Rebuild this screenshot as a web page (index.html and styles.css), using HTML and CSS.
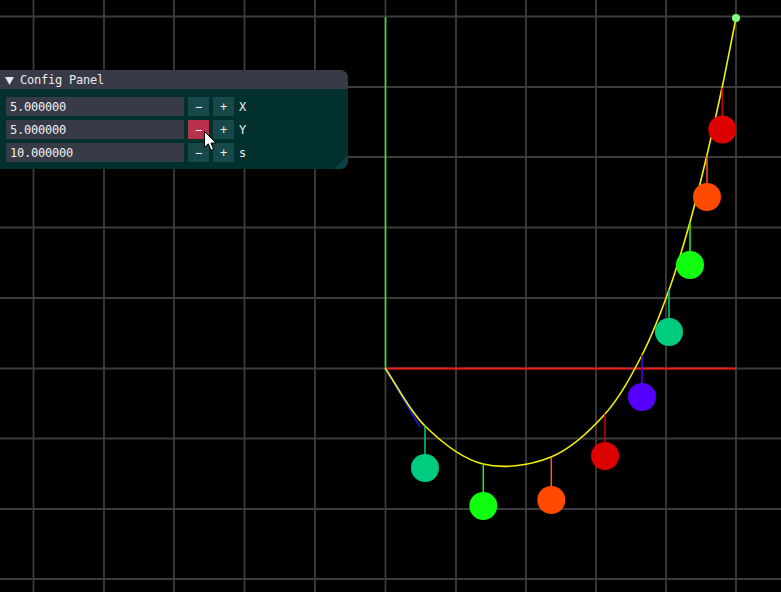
FILE: index.html
```html
<!DOCTYPE html>
<html>
<head>
<meta charset="utf-8">
<link rel="stylesheet" href="styles.css">
</head>
<body>
<div class="scene">
  <svg class="plot" width="781" height="592" viewBox="0 0 781 592">
    <g class="grid">
      <line x1="33.5" y1="0" x2="33.5" y2="592"/>
      <line x1="104" y1="0" x2="104" y2="592"/>
      <line x1="174" y1="0" x2="174" y2="592"/>
      <line x1="244.5" y1="0" x2="244.5" y2="592"/>
      <line x1="315" y1="0" x2="315" y2="592"/>
      <line x1="385.5" y1="0" x2="385.5" y2="592"/>
      <line x1="456" y1="0" x2="456" y2="592"/>
      <line x1="526" y1="0" x2="526" y2="592"/>
      <line x1="596" y1="0" x2="596" y2="592"/>
      <line x1="666" y1="0" x2="666" y2="592"/>
      <line x1="736" y1="0" x2="736" y2="592"/>
      <line x1="0" y1="16.5" x2="781" y2="16.5"/>
      <line x1="0" y1="87" x2="781" y2="87"/>
      <line x1="0" y1="157" x2="781" y2="157"/>
      <line x1="0" y1="227.5" x2="781" y2="227.5"/>
      <line x1="0" y1="298" x2="781" y2="298"/>
      <line x1="0" y1="368.5" x2="781" y2="368.5"/>
      <line x1="0" y1="438.5" x2="781" y2="438.5"/>
      <line x1="0" y1="509" x2="781" y2="509"/>
      <line x1="0" y1="579" x2="781" y2="579"/>
    </g>
    <line class="axis-y" x1="385.5" y1="17" x2="385.5" y2="368"/>
    <line class="axis-x" x1="385" y1="368.5" x2="736" y2="368.5"/>
    <line class="handle" x1="385" y1="368" x2="420" y2="427"/>
    <path class="curve" d="M385 368 C398.3 387.3 408.7 410 425 426 C441.3 442 462 458.8 483 464 C504 469.2 530.7 465.3 551 457 C571.3 448.7 589.8 431 605 414 C620.2 397 631.3 375.7 642 355 C652.7 334.3 661 312.2 669 290 C677 267.8 683.7 244.5 690 222 C696.3 199.5 701.7 177.3 707 155 C712.3 132.7 717.2 110.8 722 88 C726.8 65.2 731.3 41.3 736 18"/>
    <g class="bobs">
      <line x1="425" y1="426" x2="425" y2="468" stroke="#00cc80"/>
      <circle cx="425" cy="468" r="14" fill="#00cc80"/>
      <line x1="483.3" y1="464" x2="483.3" y2="506" stroke="#20f020"/>
      <circle cx="483.3" cy="506" r="14" fill="#10ff10"/>
      <line x1="551.3" y1="458" x2="551.3" y2="500" stroke="#ff5a10"/>
      <circle cx="551.3" cy="500" r="14" fill="#ff4a00"/>
      <line x1="605" y1="414" x2="605" y2="456" stroke="#cc0000"/>
      <circle cx="605" cy="456" r="14" fill="#dd0000"/>
      <line x1="642" y1="355" x2="642" y2="397" stroke="#5500ee"/>
      <circle cx="642" cy="397" r="14" fill="#5500ff"/>
      <line x1="669" y1="290" x2="669" y2="332" stroke="#00cc80"/>
      <circle cx="669" cy="332" r="14" fill="#00cc80"/>
      <line x1="690" y1="223" x2="690" y2="265" stroke="#20f020"/>
      <circle cx="690" cy="265" r="14" fill="#10ff10"/>
      <line x1="707" y1="156" x2="707" y2="197" stroke="#ff5a10"/>
      <circle cx="707" cy="197" r="14" fill="#ff4a00"/>
      <line x1="722.3" y1="88" x2="722.3" y2="129.5" stroke="#cc0000"/>
      <circle cx="722.3" cy="129.5" r="14" fill="#dd0000"/>
    </g>
    <circle cx="736" cy="18" r="4" fill="#80ff80"/>
  </svg>

  <div class="panel">
    <div class="title">
      <svg class="arrow" width="9" height="8" viewBox="0 0 9 8"><polygon points="0,0 9,0 4.5,8" fill="#e6e6e6"/></svg>
      <span>Config Panel</span>
    </div>
    <div class="body">
      <div class="row">
        <div class="input">5.000000</div>
        <div class="btn">−</div>
        <div class="btn">+</div>
        <span class="label">X</span>
      </div>
      <div class="row">
        <div class="input">5.000000</div>
        <div class="btn active">−</div>
        <div class="btn">+</div>
        <span class="label">Y</span>
      </div>
      <div class="row">
        <div class="input">10.000000</div>
        <div class="btn">−</div>
        <div class="btn">+</div>
        <span class="label">s</span>
      </div>
    </div>
    <div class="grip"></div>
  </div>

  <svg class="cursor" width="13" height="21" viewBox="0 0 13 21">
    <path d="M0.5 0.5 L0.5 16.5 L4.3 12.8 L7 19.3 L9.6 18.2 L7 12 L12 12 Z" fill="#ffffff" stroke="#000000" stroke-width="1"/>
  </svg>
</div>
</body>
</html>
```

FILE: styles.css
```css
html, body {
  margin: 0;
  padding: 0;
  background: #000;
  overflow: hidden;
}

.scene {
  position: relative;
  width: 781px;
  height: 592px;
  background: #000;
  overflow: hidden;
  font-family: "DejaVu Sans Mono", "Liberation Mono", monospace;
  font-size: 12px;
  letter-spacing: -0.22px;
  color: #ececec;
}

.plot {
  display: block;
}

.grid line {
  stroke: #3c3c3c;
  stroke-width: 1.8;
}

.axis-y {
  stroke: #33e033;
  stroke-width: 1.6;
}

.axis-x {
  stroke: #ee1a1a;
  stroke-width: 2;
}

.handle {
  stroke: #1414e6;
  stroke-width: 1.6;
}

.curve {
  fill: none;
  stroke: #f0f000;
  stroke-width: 1.6;
}

.bobs line {
  stroke-width: 1.5;
}

.panel {
  position: absolute;
  left: -10px;
  top: 70px;
  width: 358px;
  border-radius: 8px;
  overflow: hidden;
  background: #01302f;
}

.title {
  height: 19px;
  background: #383a47;
  display: flex;
  align-items: center;
  padding-left: 15px;
  padding-top: 1px;
  box-sizing: border-box;
  gap: 6px;
  line-height: 18px;
}

.arrow {
  display: block;
  margin-top: 1px;
}

.body {
  display: flex;
  flex-direction: column;
  gap: 4px;
  padding: 8px 0 7px 16px;
}

.row {
  display: flex;
  align-items: center;
  gap: 4px;
  height: 19px;
}

.input {
  width: 174px;
  height: 19px;
  line-height: 20px;
  padding-left: 4px;
  background: #373a47;
  color: #f0f0f0;
}

.btn {
  width: 21px;
  height: 19px;
  line-height: 20px;
  text-align: center;
  background: #17494b;
  color: #ececec;
}

.btn.active {
  background: #b8304c;
}

.label {
  line-height: 20px;
  padding-left: 1px;
}

.grip {
  position: absolute;
  right: 0;
  bottom: 0;
  width: 0;
  height: 0;
  border-left: 14px solid transparent;
  border-bottom: 14px solid #0a4141;
}

.cursor {
  position: absolute;
  left: 203.5px;
  top: 130.5px;
}
```
